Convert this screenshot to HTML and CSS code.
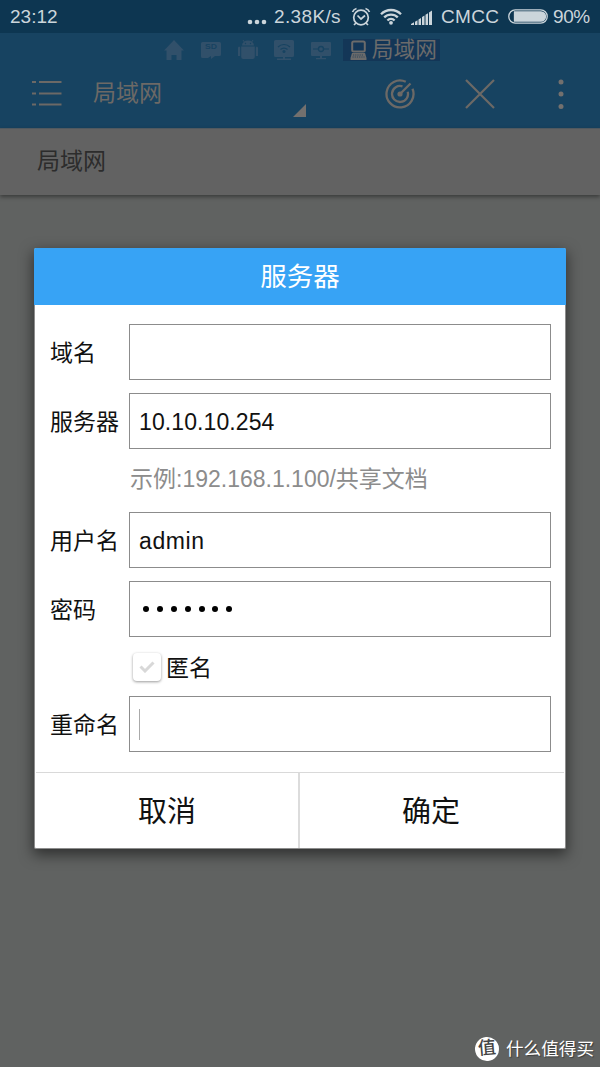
FILE: index.html
```
<!DOCTYPE html>
<html lang="zh-CN">
<head>
  <meta charset="UTF-8">
  <meta name="viewport" content="width=device-width, initial-scale=1.0">
  <title>局域网</title>
  <link rel="stylesheet" href="styles.css">
</head>
<body>
  <div class="screen">
    <div class="status-bar">
      <span class="time">23:12</span>
      <svg class="more" width="20" height="6" viewBox="0 0 20 6"><circle cx="3" cy="3" r="2.3"/><circle cx="10" cy="3" r="2.3"/><circle cx="17" cy="3" r="2.3"/></svg>
      <span class="speed">2.38K/s</span>
      <svg class="alarm" width="20" height="20" viewBox="0 0 20 20" fill="none" stroke="#cbd5db" stroke-width="1.7">
        <circle cx="10" cy="10.5" r="7.3"/>
        <path d="M6.5 8.5L10 12l4-3.5M1.5 5A6 6 0 0 1 5.5 1.5M14.5 1.5A6 6 0 0 1 18.5 5M5 16l-2 2M15 16l2 2"/>
      </svg>
      <svg class="wifi" width="22" height="17" viewBox="0 0 22 17" fill="none" stroke="#cbd5db" stroke-width="2.3">
        <path d="M1 6.2a14 14 0 0 1 20 0M4.2 9.4a9.6 9.6 0 0 1 13.6 0M7.4 12.5a5.1 5.1 0 0 1 7.2 0"/>
        <circle cx="11" cy="14.8" r="1.9" fill="#cbd5db" stroke="none"/>
      </svg>
      <svg class="signal" width="21" height="15" viewBox="0 0 21 15"><path d="M0 15v-1l3-1.700v2.700zM4 15v-3.300l2.500-1.500V15zM7.500 15V9.500L10 8V15zM11 15V7.100l2.500-1.500V15zM14.500 15V4.700L17 3.200V15zM18 15V2.400L21 .5V15z"/></svg>
      <span class="carrier">CMCC</span>
      <svg class="battery" width="40" height="15" viewBox="0 0 40 15" fill="none" stroke="#cbd5db" stroke-width="1.3">
        <rect x=".8" y=".8" width="38.4" height="13.4" rx="6.5"/>
        <path d="M6.5 3H33a4.500 4.500 0 0 1 0 9H6.500z" fill="#cbd5db"/>
      </svg>
      <span class="percent">90%</span>
    </div>

    <div class="header">
      <div class="tabs">
        <svg width="20" height="20" viewBox="0 0 20 20"><path d="M10 0l10 10.500h-2.500V20h-5v-5h-5v5h-5v-9.500H0z"/></svg>
        <svg width="20" height="20" viewBox="0 0 20 20"><path d="M1.500 2h17q1.500 0 1.500 1.500v11q0 1.500-1.500 1.500H14l-4 3v-3l-3 2H1.500Q0 18 0 16.500v-13Q0 2 1.500 2z"/><text x="10" y="9" class="sd" text-anchor="middle" textLength="12" lengthAdjust="spacingAndGlyphs">SD</text></svg>
        <svg width="20" height="20" viewBox="0 0 20 20"><path d="M4 5.500a6 5 0 0 1 12 0zM3.200 6.500h13.600v10.500q0 2-2 2h-9.600q-2 0-2-2zM0 8q0-1.500 1.100-1.500T2.200 8v8H0zM17.800 8q0-1.500 1.100-1.500T20 8v8h-2.200z"/><path d="M5 0l2 3M15 0l-2 3" stroke="#31506a"/><circle cx="7.500" cy="3.500" r=".7" fill="#174361"/><circle cx="12.500" cy="3.500" r=".7" fill="#174361"/></svg>
        <svg width="20" height="20" viewBox="0 0 20 20"><path d="M1.500 0h17Q20 0 20 1.500v14q0 1.500-1.500 1.500H11v1.500h6V20H3v-1.500h6V17H1.500Q0 17 0 15.500v-14Q0 0 1.500 0z"/><path d="M4 7a8.500 8.500 0 0 1 12 0M6.500 9.500a5 5 0 0 1 7 0" fill="none" stroke="#174361" stroke-width="1.200"/><circle cx="10" cy="11.500" r="1.500" fill="#174361"/></svg>
        <svg width="20" height="20" viewBox="0 0 20 20"><path d="M1 2h18q1 0 1 1v12q0 1-1 1h-8v2h4v1.200H5V18h4v-2H1q-1 0-1-1V3q0-1 1-1z"/><path d="M2 9h5.500M12.500 9H18" stroke="#174361"/><circle cx="10" cy="9" r="2.500" fill="none" stroke="#174361" stroke-width="1.300"/></svg>
        <div class="tab-active">
          <svg width="17" height="20" viewBox="0 0 17 20"><rect x="2.200" y="1.500" width="12.600" height="10" rx="1.500" fill="none" stroke="#6b6b6b" stroke-width="2"/><path d="M2 13h13l1.500 5v2H.500v-2z" fill="#6b6b6b"/><path d="M3 15h11M2.500 17h12" stroke="#133657" stroke-width=".7" stroke-dasharray="1.200 1"/></svg>
          <span>局域网</span>
        </div>
      </div>
      <div class="toolbar">
        <svg class="menu" width="30" height="27" viewBox="0 0 30 27" stroke="#6c6966" stroke-width="2.200"><path d="M0 2h4M7 2h22.500M0 13.500h4M7 13.500h22.500M0 24.500h4M7 24.500h22.500"/></svg>
        <span class="toolbar-title">局域网</span>
        <svg class="corner" width="13" height="13" viewBox="0 0 13 13"><path d="M13 0v13H0z" fill="#73706e"/></svg>
        <svg class="scan" width="30" height="30" viewBox="0 0 30 30" fill="none" stroke="#6c6966" stroke-width="2.300">
          <path d="M20.800 2.700A13.500 13.500 0 1 0 27.500 9.800M17.500 7.400A8 8 0 1 0 22.700 12.800M15 15L25.500 4.500"/>
          <circle cx="15" cy="15" r="2.600" fill="#6c6966" stroke="none"/>
        </svg>
        <svg class="close" width="30" height="30" viewBox="0 0 30 30" stroke="#6c6966" stroke-width="2.200"><path d="M1 1l28 28M29 1L1 29"/></svg>
        <svg class="dots" width="6" height="30" viewBox="0 0 6 30" fill="#73706e"><circle cx="3" cy="3" r="2.500"/><circle cx="3" cy="15" r="2.500"/><circle cx="3" cy="27.500" r="2.500"/></svg>
      </div>
    </div>

    <div class="path-bar">局域网</div>

    <div class="dialog">
      <div class="dialog-title">服务器</div>
      <div class="dialog-body">
        <div class="row">
          <span class="label">域名</span>
          <div class="field"></div>
        </div>
        <div class="row">
          <span class="label">服务器</span>
          <div class="field">10.10.10.254</div>
        </div>
        <div class="hint">示例:192.168.1.100/共享文档</div>
        <div class="row">
          <span class="label">用户名</span>
          <div class="field name">admin</div>
        </div>
        <div class="row">
          <span class="label">密码</span>
          <div class="field password"><i></i><i></i><i></i><i></i><i></i><i></i><i></i></div>
        </div>
        <div class="check-row">
          <div class="checkbox">
            <svg width="16" height="12" viewBox="0 0 16 12"><path d="M1.500 5.500l4.500 4.500L14.500 1.500" fill="none" stroke="#d8d8d8" stroke-width="3"/></svg>
          </div>
          <span>匿名</span>
        </div>
        <div class="row">
          <span class="label">重命名</span>
          <div class="field"><span class="caret"></span></div>
        </div>
      </div>
      <div class="buttons">
        <div class="button">取消</div>
        <div class="button">确定</div>
      </div>
    </div>

    <div class="watermark">
      <span class="logo">值</span>
      <span>什么值得买</span>
    </div>
  </div>
</body>
</html>
```
FILE: styles.css
```
* {
  box-sizing: border-box;
}
body {
  margin: 0;
  font-family: "Liberation Sans", "Noto Sans CJK SC", sans-serif;
}
svg {
  display: block;
  flex: none;
}
.screen {
  position: relative;
  width: 600px;
  height: 1067px;
  background: #606261;
  overflow: hidden;
  white-space: nowrap;
}

/* status bar */
.status-bar {
  display: flex;
  align-items: center;
  height: 33px;
  padding-left: 10px;
  background: #0d3651;
  color: #cbd5db;
  font-size: 19px;
  line-height: 33px;
}
.status-bar svg {
  fill: #cbd5db;
}
.status-bar .alarm,
.status-bar .wifi,
.status-bar .battery {
  fill: none;
}
.time {
  width: 237px;
}
.more {
  margin-top: 10px;
}
.speed {
  width: 77px;
  margin-left: 7px;
  letter-spacing: 0.35px;
}
.wifi {
  margin-left: 9px;
}
.signal {
  margin-left: 9px;
  margin-top: 2px;
}
.carrier {
  width: 59px;
  margin-left: 9px;
  letter-spacing: 0.3px;
}
.battery {
  margin-left: 8px;
}
.percent {
  margin-left: 5px;
  letter-spacing: -0.4px;
}

/* header */
.header {
  height: 95px;
  background: #174361;
}
.tabs {
  display: flex;
  align-items: center;
  gap: 16.75px;
  height: 33px;
  padding-left: 164px;
}
.tabs > svg {
  fill: #31506a;
}
.tabs .sd {
  fill: #174361;
  font-size: 7px;
  font-weight: bold;
}
.tab-active {
  display: flex;
  align-items: center;
  gap: 5px;
  width: 97px;
  height: 22px;
  margin-left: -5px;
  padding-left: 7px;
  background: #133657;
  color: #6b6b6b;
  font-size: 21.7px;
  line-height: 22px;
}
.toolbar {
  display: flex;
  align-items: center;
  height: 55px;
  padding-left: 32px;
}
.toolbar-title {
  width: 200px;
  margin-left: 31px;
  padding-bottom: 5px;
  color: #6c6966;
  font-size: 23px;
}
.corner {
  margin-top: 34px;
}
.scan {
  margin-left: 79px;
}
.close {
  margin-left: 50px;
}
.dots {
  margin-left: 63px;
}

.path-bar {
  height: 67px;
  padding-left: 37px;
  background: #626262;
  border-top: 1px solid #505960;
  color: #2c2c2c;
  font-size: 23px;
  line-height: 65px;
  box-shadow: 0 2px 4px rgba(0, 0, 0, 0.4);
}

/* dialog lies over the page */
.dialog {
  position: absolute;
  top: 248px;
  left: 34px;
  width: 532px;
  height: 601px;
  background: #fff;
  border: 1px solid #8d8d8d;
  border-top: none;
  border-radius: 2px;
  box-shadow: 0 5px 14px 1px rgba(0, 0, 0, 0.5);
  color: #111;
}
.dialog-title {
  height: 57px;
  margin: 0 -1px;
  background: #37a3f5;
  border-radius: 2px 2px 0 0;
  color: #fff;
  font-size: 26.5px;
  line-height: 59px;
  text-align: center;
}
.dialog-body {
  height: 467px;
  padding: 19px 14px 0 15px;
  font-size: 23px;
}
.row {
  display: flex;
  align-items: center;
  margin-bottom: 13px;
}
.label {
  width: 79px;
  padding-bottom: 2px;
}
.field {
  display: flex;
  align-items: center;
  width: 422px;
  height: 56px;
  padding: 2px 0 0 9px;
  border: 1px solid #8c8c8c;
  letter-spacing: 0.1px;
}
.name {
  letter-spacing: 0.6px;
}
.hint {
  height: 50px;
  padding-left: 80px;
  color: #8c8c8c;
  line-height: 34px;
}
.password {
  gap: 7.9px;
  padding: 0 0 0 13px;
}
.password i {
  width: 6px;
  height: 6px;
  border-radius: 50%;
  background: #000;
}
.check-row {
  display: flex;
  align-items: center;
  gap: 5px;
  height: 34px;
  margin-bottom: 12px;
  padding-left: 83px;
}
.check-row span {
  padding-bottom: 3px;
}
.checkbox {
  display: flex;
  align-items: center;
  justify-content: center;
  width: 28px;
  height: 28px;
  border-radius: 4px;
  box-shadow: 0 1px 3px rgba(0, 0, 0, 0.4);
}
.caret {
  width: 1px;
  height: 31px;
  margin-top: -2px;
  background: #aaa;
}
.buttons {
  display: flex;
  height: 76px;
  margin: 0 1px;
  border-top: 1px solid #d9d9d9;
}
.button {
  flex: 1;
  font-size: 29px;
  line-height: 79px;
  text-align: center;
}
.button + .button {
  padding-right: 2px;
  border-left: 2px solid #dcdcdc;
}

.watermark {
  position: absolute;
  left: 475px;
  top: 1036px;
  display: flex;
  align-items: center;
  gap: 7px;
  color: #fff;
  font-size: 17.6px;
  line-height: 26px;
  text-shadow: 1px 1px 1px rgba(0, 0, 0, 0.4);
}
.logo {
  width: 24px;
  height: 24px;
  border-radius: 50%;
  background: #fff;
  color: #444;
  font-size: 18px;
  font-weight: 500;
  line-height: 23px;
  text-align: center;
  text-shadow: none;
  transform: rotate(-5deg);
}
```
